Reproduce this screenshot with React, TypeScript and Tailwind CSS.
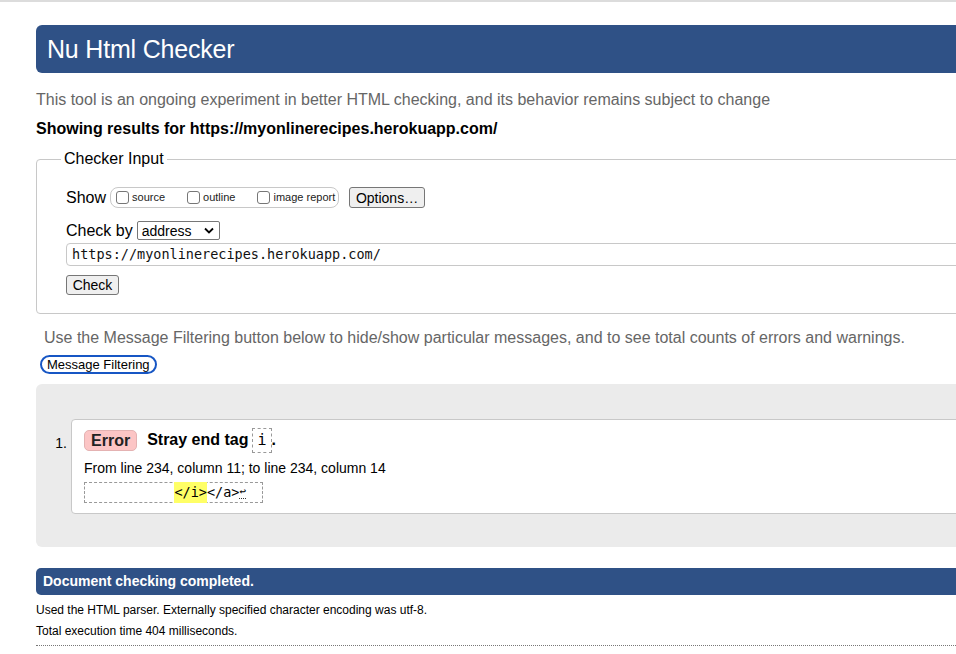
import React from "react";

const Checkbox = ({ label }: { label: string }) => (
  <span className="flex items-center whitespace-nowrap">
    <span className="w-[13px] h-[13px] border border-[#767676] rounded-[3px] bg-white mr-[3px]" />
    <span className="text-[11px] text-[#222]">{label}</span>
  </span>
);

const App = () => {
  return (
    <div className="relative w-[956px] h-[654px] overflow-hidden bg-white border-t-2 border-[#dcdcdc] font-['Liberation_Sans',Arial,sans-serif] text-black">
      <div className="w-[1000px] pl-[36px]">
        {/* header */}
        <div className="mt-[23px] h-[48px] bg-[#2f5186] rounded-l-[6px] flex items-center pl-[11px]">
          <h1 className="text-[25px] text-white leading-none tracking-[-0.2px]">Nu Html Checker</h1>
        </div>

        <p className="mt-[18px] text-[16px] leading-[18px] text-[#666]">
          This tool is an ongoing experiment in better HTML checking, and its behavior remains subject to change
        </p>
        <p className="mt-[11px] text-[16px] leading-[18px] font-bold">
          Showing results for https://myonlinerecipes.herokuapp.com/
        </p>

        {/* checker input */}
        <fieldset className="mt-[12px] border border-[#c8c8c8] rounded-[4px] h-[164px]">
          <legend className="ml-[24px] px-[3px] text-[16px] leading-[18px]">Checker Input</legend>
          <div className="pl-[29px]">
            <div className="mt-[19px] flex items-center h-[21px]">
              <span className="text-[16px] mr-[4px]">Show</span>
              <div className="flex items-center gap-[22px] h-[21px] border border-[#c8c8c8] rounded-[8px] pl-[5px] w-[229px]">
                <Checkbox label="source" />
                <Checkbox label="outline" />
                <Checkbox label="image report" />
              </div>
              <button className="ml-[10px] h-[21px] w-[76px] bg-[#efefef] border border-[#767676] rounded-[3px] text-[14px] text-black">
                Options…
              </button>
            </div>
            <div className="mt-[13px] flex items-center h-[19px]">
              <span className="text-[16px] mr-[4px]">Check by</span>
              <div className="h-[19px] w-[83px] border border-[#767676] rounded-[2px] bg-white flex items-center pl-[4px] pr-[5px] justify-between">
                <span className="text-[14px] leading-none">address</span>
                <svg width="10" height="7" viewBox="0 0 10 7">
                  <path d="M1 1.5 L5 5.5 L9 1.5" fill="none" stroke="#000" strokeWidth="1.8" />
                </svg>
              </div>
            </div>
            <div className="mt-[3px] h-[23px] border border-[#c8c8c8] rounded-[4px] flex items-center pl-[5px]">
              <span className="font-['DejaVu_Sans_Mono',monospace] text-[13.5px] text-[#111]">
                https://myonlinerecipes.herokuapp.com/
              </span>
            </div>
            <button className="mt-[9px] h-[20px] w-[53px] bg-[#efefef] border border-[#767676] rounded-[3px] text-[14px] leading-none">
              Check
            </button>
          </div>
        </fieldset>

        <p className="mt-[15px] ml-[8px] text-[16px] leading-[18px] text-[#666]">
          Use the Message Filtering button below to hide/show particular messages, and to see total counts of errors and warnings.
        </p>
        <button className="mt-[8px] ml-[4px] h-[19px] px-[5px] border-2 border-[#1756c4] rounded-full text-[13px] leading-none text-black">
          Message Filtering
        </button>

        {/* results */}
        <div className="mt-[8px] h-[163px] bg-[#ebebeb] rounded-[6px] pt-[35px] flex">
          <span className="w-[35px] text-right pr-[4px] pt-[14px] text-[14px]">1.</span>
          <div className="h-[95px] flex-1 bg-white border border-[#c8c8c8] rounded-[4px] pl-[12px] pt-[7px]">
            <div className="flex items-center h-[26px]">
              <span className="h-[21px] px-[6px] bg-[#fcc5c5] border border-[#e4b2b2] rounded-[5px] text-[16px] font-bold leading-[19px] text-[#222]">
                Error
              </span>
              <span className="ml-[10px] text-[16px] font-bold">Stray end tag</span>
              <span className="ml-[4px] h-[25px] px-[4px] border border-dashed border-[#999] flex items-center font-['DejaVu_Sans_Mono',monospace] text-[15px]">
                i
              </span>
              <span className="text-[16px] font-bold">.</span>
            </div>
            <p className="mt-[7px] text-[14px] leading-[16px]">From line 234, column 11; to line 234, column 14</p>
            <div className="mt-[6px] w-[179px] h-[21px] border border-dashed border-[#999] flex items-center font-['DejaVu_Sans_Mono',monospace] text-[13.5px] whitespace-pre">
              <span>{"           "}</span>
              <span className="bg-[#ffff66]">{"</i>"}</span>
              <span>{"</a>"}</span>
              <span className="border-b border-dotted border-[#333] text-[11px] leading-[12px]">↩</span>
            </div>
          </div>
        </div>

        {/* summary */}
        <div className="mt-[21px] h-[27px] bg-[#2f5186] rounded-l-[5px] flex items-center pl-[7px]">
          <span className="text-[14px] font-bold text-white">Document checking completed.</span>
        </div>
        <p className="mt-[8px] text-[12px] leading-[14px]">
          Used the HTML parser. Externally specified character encoding was utf-8.
        </p>
        <p className="mt-[7px] text-[12px] leading-[14px]">Total execution time 404 milliseconds.</p>
        <div className="mt-[7px] border-t border-dotted border-[#777]" />
      </div>
    </div>
  );
};

export default App;
